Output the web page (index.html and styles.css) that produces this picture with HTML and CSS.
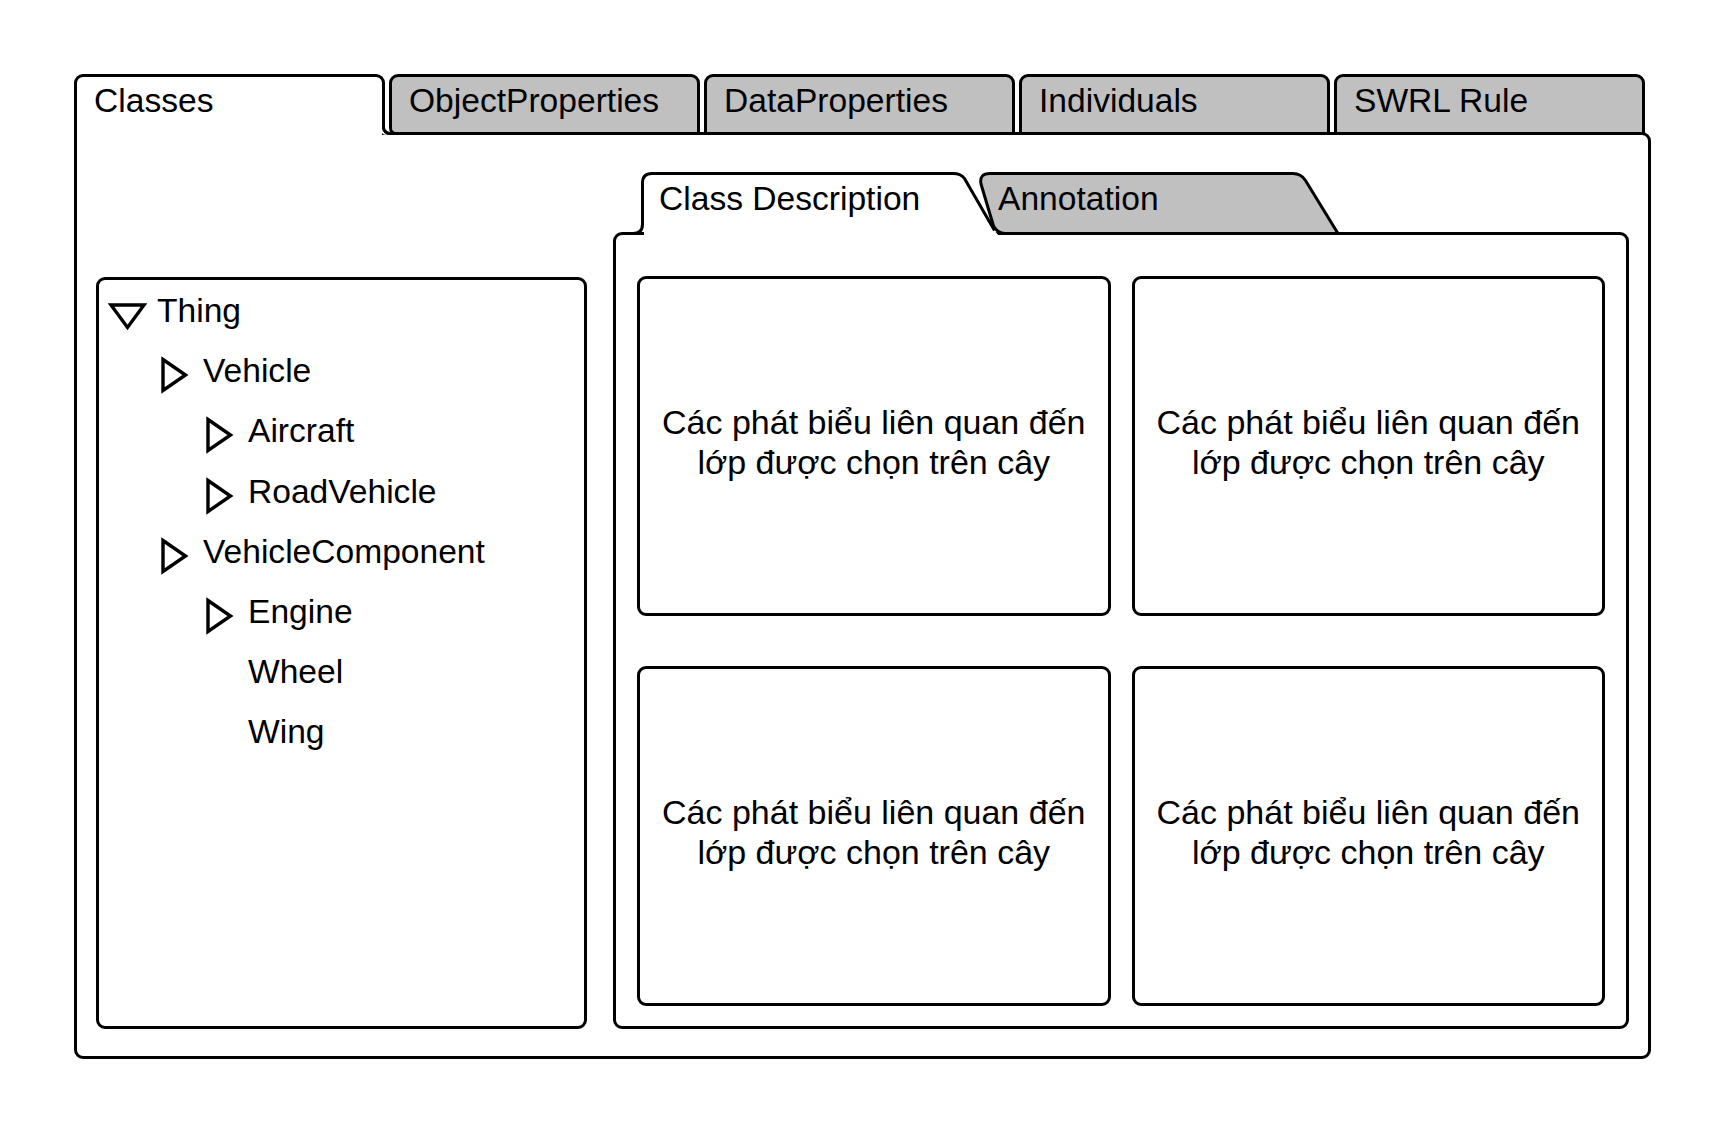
FILE: index.html
```html
<!DOCTYPE html>
<html lang="vi">
<head>
<meta charset="utf-8">
<title>Classes</title>
<link rel="stylesheet" href="styles.css">
</head>
<body>
<div class="window">
  <div class="tabs">
    <div class="tab tab-active">Classes</div>
    <div class="tab tab-first">ObjectProperties</div>
    <div class="tab">DataProperties</div>
    <div class="tab">Individuals</div>
    <div class="tab">SWRL Rule</div>
  </div>
  <div class="panel">
    <div class="tree">
      <div class="row l0"><svg class="tri-down" viewBox="0 0 39 27"><polygon points="3,2 36,2 19.5,24.5"/></svg><span>Thing</span></div>
      <div class="row l1"><svg class="tri-right" viewBox="0 0 27 36"><polygon points="2,2.5 24.5,18 2,33.5"/></svg><span>Vehicle</span></div>
      <div class="row l2"><svg class="tri-right" viewBox="0 0 27 36"><polygon points="2,2.5 24.5,18 2,33.5"/></svg><span>Aircraft</span></div>
      <div class="row l2"><svg class="tri-right" viewBox="0 0 27 36"><polygon points="2,2.5 24.5,18 2,33.5"/></svg><span>RoadVehicle</span></div>
      <div class="row l1"><svg class="tri-right" viewBox="0 0 27 36"><polygon points="2,2.5 24.5,18 2,33.5"/></svg><span>VehicleComponent</span></div>
      <div class="row l2"><svg class="tri-right" viewBox="0 0 27 36"><polygon points="2,2.5 24.5,18 2,33.5"/></svg><span>Engine</span></div>
      <div class="row l2"><i class="spacer"></i><span>Wheel</span></div>
      <div class="row l2"><i class="spacer"></i><span>Wing</span></div>
    </div>
    <div class="inner">
      <div class="inner-head">
        <svg class="inner-shapes" width="1016" height="64" viewBox="0 0 1016 64">
          <path class="annot-shape" d="M 380.5,54 L 368,12 Q 366,1.5 377,1.5 L 680,1.5 Q 688,1.5 692.5,8.5 L 725,61.5 L 392,61.5 Q 384.5,61.5 380.5,54 Z"/>
          <path class="cd-fill" d="M 31,64 L 31,11 Q 31,3 39,3 L 340,3 Q 347,3 350,7.5 L 381,58 L 386,64 Z"/>
          <path class="cd-stroke" d="M 20,61.5 Q 29.5,61.5 29.5,52 L 29.5,11 Q 29.5,1.5 39,1.5 L 340,1.5 Q 348,1.5 351.5,6.5 L 381.5,58.5"/>
        </svg>
        <span class="ilabel ilabel-cd">Class Description</span>
        <span class="ilabel ilabel-an">Annotation</span>
      </div>
      <div class="inner-body">
        <div class="card"><p>Các phát biểu liên quan đến<br>lớp được chọn trên cây</p></div>
        <div class="card"><p>Các phát biểu liên quan đến<br>lớp được chọn trên cây</p></div>
        <div class="card"><p>Các phát biểu liên quan đến<br>lớp được chọn trên cây</p></div>
        <div class="card"><p>Các phát biểu liên quan đến<br>lớp được chọn trên cây</p></div>
      </div>
    </div>
  </div>
</div>
</body>
</html>
```
FILE: styles.css
```css
* { box-sizing: border-box; }
html, body { margin: 0; padding: 0; background: #fff; }
body {
  font-family: "Liberation Sans", Arial, Helvetica, sans-serif;
  color: #000;
}

.window {
  width: 1577px;
  margin: 74px 0 0 74px;
}

/* top tab strip */
.tabs {
  display: flex;
  gap: 4px;
  height: 61px;
  position: relative;
  z-index: 2;
}
.tab {
  width: 311px;
  height: 61px;
  flex: none;
  border: 3px solid #000;
  border-radius: 9px 9px 0 0;
  background: #c0c0c0;
  font-size: 33.6px;
  line-height: 38px;
  padding: 5px 0 0 17px;
  white-space: nowrap;
}
.tab-first { border-bottom-left-radius: 7px; }
.tab-active {
  position: relative;
  background: #fff;
  border-bottom: none;
}
.tab-active::after {
  content: "";
  position: absolute;
  left: 100%;
  bottom: 0;
  width: 8px;
  height: 11px;
  border-left: 3px solid #000;
  border-bottom: 3px solid #000;
  border-bottom-left-radius: 8px;
  box-shadow: -3px 0 0 #fff;
}

/* main panel */
.panel {
  margin-top: -3px;
  height: 927px;
  border: 3px solid #000;
  border-radius: 0 9px 9px 9px;
  display: flex;
  align-items: flex-end;
  gap: 26px;
  padding: 0 19px 27px 19px;
}

/* class tree */
.tree {
  width: 491px;
  height: 752px;
  flex: none;
  border: 3px solid #000;
  border-radius: 9px;
  padding-top: 1px;
  font-size: 33.6px;
}
.row {
  display: flex;
  align-items: center;
  height: 60.2px;
  white-space: nowrap;
}
.l0 { padding-left: 9px; }
.l1 { padding-left: 62px; }
.l2 { padding-left: 107px; }
.tri-down, .tri-right { flex: none; overflow: visible; }
.tri-down polygon, .tri-right polygon {
  fill: none;
  stroke: #000;
  stroke-width: 3.4;
  stroke-linejoin: miter;
}
.tri-down {
  width: 39px;
  height: 27px;
  margin-top: 11px;
  margin-right: 10px;
}
.tri-right {
  width: 27px;
  height: 36px;
  margin-top: 8px;
  margin-right: 15px;
}
.spacer {
  display: block;
  width: 27px;
  height: 1px;
  margin-right: 15px;
  flex: none;
}

/* inner description panel */
.inner {
  width: 1016px;
  height: 857px;
  flex: none;
  display: flex;
  flex-direction: column;
}
.inner-head {
  position: relative;
  z-index: 1;
  height: 60px;
  flex: none;
  display: flex;
}
.inner-shapes {
  position: absolute;
  left: 0;
  top: 0;
  overflow: visible;
}
.annot-shape {
  fill: #c0c0c0;
  stroke: #000;
  stroke-width: 3;
  stroke-linejoin: round;
}
.cd-fill { fill: #fff; stroke: none; }
.cd-stroke {
  fill: none;
  stroke: #000;
  stroke-width: 3;
  stroke-linejoin: round;
}
.ilabel {
  position: relative;
  font-size: 33.6px;
  line-height: 38px;
  padding-top: 8px;
  white-space: nowrap;
}
.ilabel-cd { margin-left: 46px; width: 339px; }

.inner-body {
  flex: 1;
  border: 3px solid #000;
  border-radius: 9px;
  display: grid;
  grid-template-columns: 1fr 1fr;
  grid-template-rows: 340px 340px;
  column-gap: 21px;
  row-gap: 50px;
  padding: 41px 21px 20px 21px;
}
.card {
  border: 3px solid #000;
  border-radius: 9px;
  display: flex;
  align-items: center;
  justify-content: center;
  text-align: center;
  padding-bottom: 8px;
}
.card p {
  margin: 0;
  font-size: 34px;
  line-height: 40px;
}
```
